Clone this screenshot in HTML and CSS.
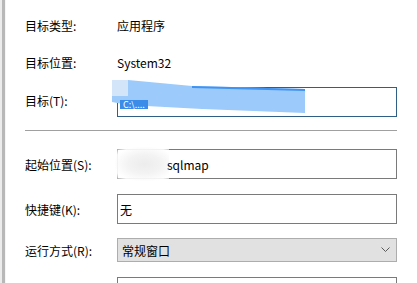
FILE: index.html
```html
<!DOCTYPE html>
<html lang="zh-CN">
<head>
  <meta charset="UTF-8" />
  <meta name="viewport" content="width=device-width, initial-scale=1.0"/>
  <title>属性 - 快捷方式</title>
  <link rel="stylesheet" href="styles.css">
</head>
<body>
  <div class="panel">
    <div class="row row-type">
      <span class="label">目标类型:</span>
      <span class="value">应用程序</span>
    </div>
    <div class="row row-loc">
      <span class="label">目标位置:</span>
      <span class="value">System32</span>
    </div>
    <div class="row row-target">
      <span class="label">目标(T):</span>
      <div class="field focused">
        <div class="smear-edge"></div>
        <div class="smear"></div>
        <div class="smear-top"></div>
        <span class="sel-text">C:\....</span>
      </div>
    </div>

    <div class="divider"></div>

    <div class="row row-start">
      <span class="label">起始位置(S):</span>
      <div class="field">
        <div class="blur"></div>
        <span class="start-text">sqlmap</span>
      </div>
    </div>
    <div class="row row-key">
      <span class="label">快捷键(K):</span>
      <div class="field"><span class="text">无</span></div>
    </div>
    <div class="row row-run">
      <span class="label">运行方式(R):</span>
      <div class="select">
        <span>常规窗口</span>
        <svg class="chev" width="9" height="6" viewBox="0 0 9 6">
          <polyline points="0.5,0.5 4.5,4.5 8.5,0.5" fill="none" stroke="#5a5a5a" stroke-width="1"/>
        </svg>
      </div>
    </div>
    <div class="row row-comment">
      <span class="label"></span>
      <div class="field"></div>
    </div>
  </div>
</body>
</html>
```

FILE: styles.css
```css
html {
  overflow: hidden;
}
body {
  margin: 0;
  height: 283px;
  overflow: hidden;
  background: linear-gradient(to right, #ececec 0 2px, #b8b8b8 2px 5px, #f6f6f6 5px 6px, #fff 6px);
  font-family: "Microsoft YaHei", "Noto Sans CJK SC", sans-serif;
  font-size: 12px;
  color: #000;
}
.panel {
  padding: 0 20px 0 25px;
}
.row {
  display: grid;
  grid-template-columns: 92px 1fr;
  align-items: center;
}
.label {
  white-space: nowrap;
}
.row-type {
  margin-top: 12px;
  height: 26px;
}
.row-loc {
  margin-top: 11px;
  height: 26px;
}
.row-target {
  margin-top: 12px;
  height: 30px;
}
.row-target .label {
  margin-top: -3px;
}
.divider {
  margin-top: 13px;
  height: 1px;
  background: #a0a0a0;
}
.row-start {
  margin-top: 18px;
  height: 30px;
}
.row-key {
  margin-top: 15px;
  height: 30px;
}
.row-run {
  margin-top: 14px;
  height: 24px;
}
.row-comment {
  margin-top: 15px;
  height: 30px;
}
.field {
  position: relative;
  height: 30px;
  box-sizing: border-box;
  border: 1px solid #7a7a7a;
  background: #fff;
  display: flex;
  align-items: center;
}
.field.focused {
  border-color: #2f5f86;
}
.field .text {
  padding-left: 2px;
}
.sel-text {
  position: relative;
  margin-left: 2px;
  margin-top: 4px;
  padding: 0 3px;
  background: #3b8ce8;
  color: #fff;
  font-size: 9px;
  line-height: 9px;
}
/* blurred-out path, sits over the box */
.smear {
  position: absolute;
  left: -6px;
  top: -8px;
  width: 193px;
  height: 33px;
  background: #9ccafa;
  clip-path: polygon(16px 0, 80px 6px, 193px 9px, 193px 33px, 90px 29px, 16px 25px, 0 22px, 0 16px, 16px 16px);
}
.smear-top {
  position: absolute;
  left: 74px;
  top: -2px;
  width: 113px;
  height: 5px;
  background: #3f93f2;
  clip-path: polygon(0 0, 40px 1px, 113px 3px, 113px 5px, 0 2px);
}
.smear-edge {
  position: absolute;
  left: -6px;
  top: -8px;
  width: 17px;
  height: 17px;
  background: #d2e5f9;
}
.blur {
  position: absolute;
  left: -3px;
  top: -3px;
  width: 54px;
  height: 34px;
  background: radial-gradient(ellipse at 55% 50%, #ececec 0, #f3f3f3 40%, rgba(255,255,255,0.9) 75%, rgba(255,255,255,0) 100%);
}
.start-text {
  position: relative;
  padding-left: 49px;
}
.select {
  height: 24px;
  box-sizing: border-box;
  border: 1px solid #adadad;
  background: #e1e1e1;
  display: flex;
  align-items: center;
  justify-content: space-between;
  padding: 0 6px 0 4px;
}
.chev {
  display: block;
}
```
